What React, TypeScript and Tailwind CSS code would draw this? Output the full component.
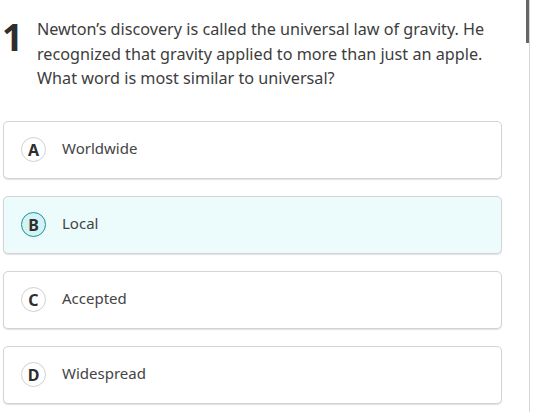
import React from "react";

const options = [
  { letter: "A", text: "Worldwide", selected: false },
  { letter: "B", text: "Local", selected: true },
  { letter: "C", text: "Accepted", selected: false },
  { letter: "D", text: "Widespread", selected: false },
];

export default function App() {
  return (
    <div className="flex w-[539px] h-[412px] bg-white overflow-hidden" style={{ fontFamily: '"Noto Sans", sans-serif' }}>
      <div className="w-[526px] shrink-0 pl-[3px] pr-[24px]">
        <div className="flex pt-[17px]">
          <div className="w-[34px] shrink-0 text-[37px] leading-[40px] font-bold text-[#2e2e2e] -ml-[1px]">1</div>
          <p className="ml-[1px] text-[16.2px] leading-[24.5px] text-[#3d3d3d]">
            Newton’s discovery is called the universal law of gravity. He recognized that gravity applied to more than just an apple. What word is most similar to universal?
          </p>
        </div>
        <div className="mt-[30px] flex flex-col gap-[17px]">
          {options.map((o) => (
            <div
              key={o.letter}
              className={`h-[58px] flex items-center rounded-[5px] border border-[#d4d4d4] shadow-[0_1px_1px_rgba(0,0,0,0.12)] ${o.selected ? "bg-[#ecfcfc]" : "bg-white"}`}
            >
              <div
                className={`ml-[17px] w-[25px] h-[25px] rounded-full flex items-center justify-center text-[16px] leading-none font-bold text-[#2e2e2e] ${o.selected ? "border-[1.5px] border-[#1f8f94] bg-[#d3f3f4]" : "border border-[#d0d0d0] bg-white"}`}
              >
                {o.letter}
              </div>
              <span className="ml-[16px] -mt-[2px] text-[15px] text-[#444444]">{o.text}</span>
            </div>
          ))}
        </div>
      </div>
      <div className="w-[3px] h-[43px] bg-[#666]" />
      <div className="w-px h-full bg-[#d6d6d6]" />
      <div className="flex-1" />
    </div>
  );
}
